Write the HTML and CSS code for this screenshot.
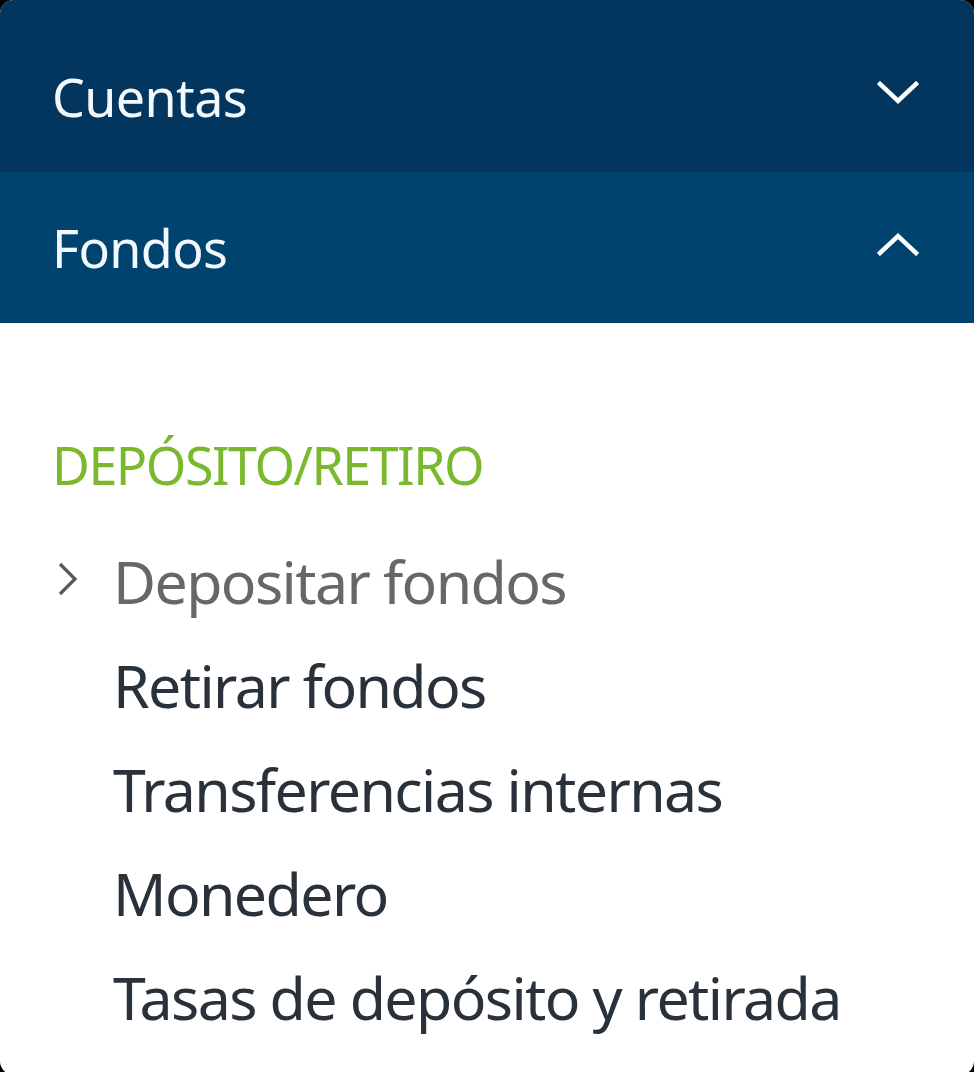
FILE: index.html
```html
<!DOCTYPE html>
<html lang="es">
<head>
<meta charset="utf-8">
<title>Menú</title>
<link rel="stylesheet" href="styles.css">
</head>
<body>
<nav class="panel">
  <div class="acc-head acc-first">
    <span class="acc-title">Cuentas</span>
    <svg class="chev" width="42" height="24" viewBox="0 0 42 24"><path d="M3 3 L21 20 L39 3" fill="none" stroke="#ffffff" stroke-width="4.5" stroke-linecap="square"/></svg>
  </div>
  <div class="acc-head acc-open">
    <span class="acc-title">Fondos</span>
    <svg class="chev" width="42" height="24" viewBox="0 0 42 24"><path d="M3 21 L21 4 L39 21" fill="none" stroke="#ffffff" stroke-width="4.5" stroke-linecap="square"/></svg>
  </div>
  <div class="acc-body">
    <div class="group-label">DEPÓSITO/RETIRO</div>
    <ul class="items">
      <li class="item active">
        <span class="mark"><svg width="22" height="36" viewBox="0 0 22 36"><path d="M3 3 L18 18 L3 33" fill="none" stroke="#55585e" stroke-width="3.2"/></svg></span>
        <span class="label">Depositar fondos</span>
      </li>
      <li class="item"><span class="mark"></span><span class="label">Retirar fondos</span></li>
      <li class="item"><span class="mark"></span><span class="label">Transferencias internas</span></li>
      <li class="item"><span class="mark"></span><span class="label">Monedero</span></li>
      <li class="item"><span class="mark"></span><span class="label">Tasas de depósito y retirada</span></li>
    </ul>
  </div>
</nav>
</body>
</html>
```
FILE: styles.css
```css
html, body {
  margin: 0;
  padding: 0;
  background: #000000;
}
body {
  font-family: "Noto Sans", "Open Sans", "DejaVu Sans", sans-serif;
}
.panel {
  width: 974px;
  height: 1075px;
  background: #ffffff;
  border-radius: 14px;
  overflow: hidden;
}
.acc-head {
  display: flex;
  align-items: center;
  justify-content: space-between;
  height: 151px;
  padding: 0 55px 0 52px;
  box-sizing: border-box;
  color: #f3f8fc;
}
.acc-first {
  background: #02365e;
  height: 172px;
  padding-top: 21px;
}
.acc-open {
  background: #00436f;
}
.acc-title {
  font-size: 52px;
  line-height: 60px;
  letter-spacing: -0.6px;
}
.chev {
  display: block;
  margin-top: -8px;
}
.acc-body {
  padding: 112px 0 0 52px;
}
.group-label {
  color: #7ab82e;
  font-size: 52px;
  line-height: 60px;
  letter-spacing: -1.5px;
}
.items {
  list-style: none;
  margin: 34px 0 0;
  padding: 0;
}
.item {
  display: flex;
  align-items: center;
  height: 104px;
  color: #29313a;
  font-size: 59px;
  line-height: 104px;
  letter-spacing: -1.6px;
}
.item.active {
  color: #66676b;
}
.mark {
  width: 61px;
  flex: 0 0 61px;
  display: flex;
  align-items: center;
}
.mark svg {
  display: block;
  margin-left: 5px;
  margin-top: -4px;
}
```
